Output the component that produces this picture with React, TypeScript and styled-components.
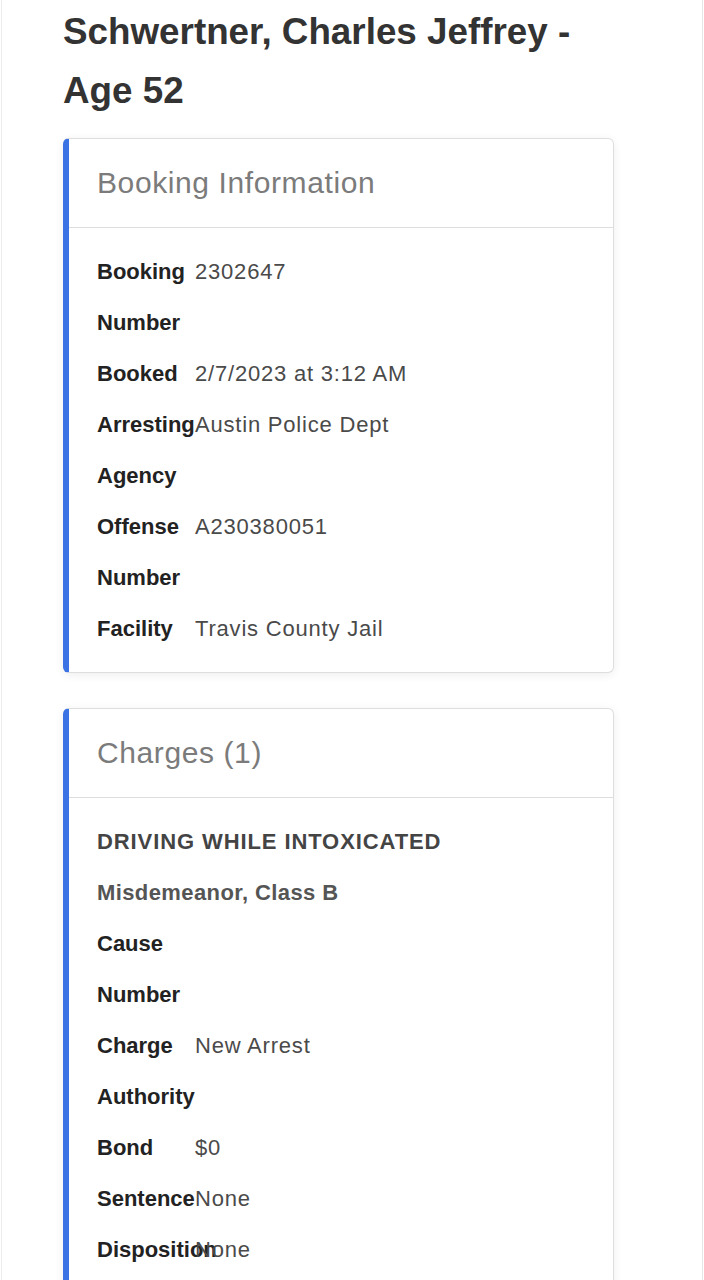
import React from "react";
import styled, { createGlobalStyle } from "styled-components";

const GlobalStyle = createGlobalStyle`
  html, body { margin: 0; padding: 0; background: #ffffff; }
  body { font-family: "Liberation Sans", Arial, sans-serif; }
  * { box-sizing: border-box; }
`;

const Page = styled.main`
  margin: 0 1px;
  min-height: 1280px;
  border-left: 1px solid #ececec;
  border-right: 1px solid #e6e6e6;
  padding: 2px 0 40px 61px;
  display: flex;
  flex-direction: column;
  gap: 35px;
`;

const Title = styled.h1`
  margin: 0 0 -17px 0;
  font-size: 36.8px;
  line-height: 59px;
  font-weight: 700;
  color: #333333;
  width: 570px;
`;

const Card = styled.section`
  width: 551px;
  background: #ffffff;
  border: 1px solid #dedede;
  border-left: 6px solid #3b72e4;
  border-radius: 6px;
  box-shadow: 0 2px 10px rgba(0, 0, 0, 0.07);
  display: flex;
  flex-direction: column;
`;

const CardHeader = styled.header`
  height: 89px;
  display: flex;
  align-items: center;
  padding-left: 28px;
  border-bottom: 1px solid #dddddd;
`;

const CardTitle = styled.h2`
  margin: 0;
  font-size: 30px;
  font-weight: 400;
  letter-spacing: 0.6px;
  color: #7b7b7b;
`;

const CardBody = styled.div`
  padding: 18px 28px 18px 28px;
  display: flex;
  flex-direction: column;
`;

const Details = styled.dl`
  margin: 0;
  display: grid;
  grid-template-columns: 98px 1fr;
  line-height: 51px;
  font-size: 22px;
`;

const Label = styled.dt`
  margin: 0;
  font-weight: 700;
  color: #222222;
  white-space: normal;
  overflow: visible;
`;

const Value = styled.dd`
  margin: 0;
  color: #4a4a4a;
  letter-spacing: 0.8px;
`;

const ChargeName = styled.div<{ $tone: string; $spacing: number }>`
  font-size: 22px;
  line-height: 51px;
  font-weight: 700;
  color: ${(p) => p.$tone};
  letter-spacing: ${(p) => p.$spacing}px;
`;

type Row = [string, string];

const booking: Row[] = [
  ["Booking Number", "2302647"],
  ["Booked", "2/7/2023 at 3:12 AM"],
  ["Arresting Agency", "Austin Police Dept"],
  ["Offense Number", "A230380051"],
  ["Facility", "Travis County Jail"],
];

const charge: Row[] = [
  ["Cause Number", ""],
  ["Charge Authority", "New Arrest"],
  ["Bond", "$0"],
  ["Sentence", "None"],
  ["Disposition", "None"],
];

const DetailList = ({ rows }: { rows: Row[] }) => (
  <Details>
    {rows.map(([k, v]) => (
      <React.Fragment key={k}>
        <Label>{k}</Label>
        <Value>{v}</Value>
      </React.Fragment>
    ))}
  </Details>
);

export default function App() {
  return (
    <>
      <GlobalStyle />
      <Page>
        <Title>Schwertner, Charles Jeffrey - Age 52</Title>
        <Card>
          <CardHeader>
            <CardTitle>Booking Information</CardTitle>
          </CardHeader>
          <CardBody>
            <DetailList rows={booking} />
          </CardBody>
        </Card>
        <Card>
          <CardHeader>
            <CardTitle>Charges (1)</CardTitle>
          </CardHeader>
          <CardBody>
            <ChargeName $tone="#444444" $spacing={0.9}>
              DRIVING WHILE INTOXICATED
            </ChargeName>
            <ChargeName $tone="#555555" $spacing={0.4}>
              Misdemeanor, Class B
            </ChargeName>
            <DetailList rows={charge} />
          </CardBody>
        </Card>
      </Page>
    </>
  );
}
